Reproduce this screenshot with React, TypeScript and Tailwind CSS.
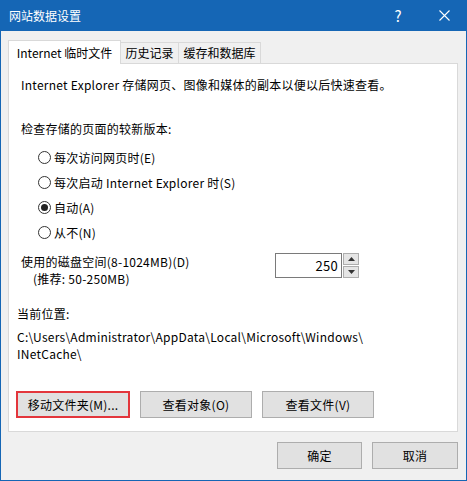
import React, { useState } from "react";

const font = { fontFamily: '"Noto Sans CJK SC", "Noto Sans", sans-serif' };

function Radio({ label, checked, onClick }: { label: string; checked: boolean; onClick: () => void }) {
  return (
    <div className="h-[25px] flex items-center pl-[22px] cursor-default" onClick={onClick}>
      <span className="w-[13px] h-[13px] rounded-full border border-[#333] bg-white flex items-center justify-center">
        {checked && <span className="w-[7px] h-[7px] rounded-full bg-[#222]" />}
      </span>
      <span className="ml-[3px]">{label}</span>
    </div>
  );
}

export default function App() {
  const [mode, setMode] = useState(2);
  const [size, setSize] = useState(250);
  const options = ["每次访问网页时(E)", "每次启动 Internet Explorer 时(S)", "自动(A)", "从不(N)"];

  return (
    <div
      className="w-[467px] h-[481px] bg-[#f0f0f0] border-x border-b border-[#1566b5] flex flex-col text-[12px] leading-[16px] text-black"
      style={font}
    >
      {/* title bar */}
      <div className="h-[31px] bg-[#1566b5] flex items-center text-white shrink-0 -mx-px">
        <span className="pl-[9px] flex-1">网站数据设置</span>
        <span className="w-[46px] text-center text-[15px]">?</span>
        <span className="w-[46px] h-full flex items-center justify-center">
          <svg width="11" height="11" viewBox="0 0 11 11" stroke="white" strokeWidth="1.1">
            <path d="M0.5 0.5 L10.5 10.5 M10.5 0.5 L0.5 10.5" />
          </svg>
        </span>
      </div>

      <div className="pl-[7px] pr-[8px] pt-[9px] flex flex-col tracking-[0.25px]">
        {/* tabs */}
        <div className="flex items-end h-[23px] tracking-normal">
          <div className="w-[113px] h-[24px] -mb-px z-10 bg-white border border-b-0 border-[#d9d9d9] flex items-center justify-center">
            Internet 临时文件
          </div>
          <div className="w-[58px] h-[21px] border border-l-0 border-b-0 border-[#d9d9d9] flex items-center justify-center">历史记录</div>
          <div className="w-[82px] h-[21px] border border-l-0 border-b-0 border-[#d9d9d9] flex items-center justify-center">缓存和数据库</div>
        </div>

        {/* panel */}
        <div className="bg-white border border-[#d9d9d9] h-[369px] flex flex-col px-[7px] pt-[13px]">
          <div className="pl-[5px]">Internet Explorer 存储网页、图像和媒体的副本以便以后快速查看。</div>
          <div className="pl-[5px] mt-[28px]">检查存储的页面的较新版本:</div>
          <div className="mt-[8px] flex flex-col">
            {options.map((o, i) => (
              <Radio key={o} label={o} checked={mode === i} onClick={() => setMode(i)} />
            ))}
          </div>

          <div className="mt-[8px] flex">
            <div className="pl-[5px] w-[259px] leading-[17px]">
              <div>使用的磁盘空间(8-1024MB)(D)</div>
              <div className="pl-[12px]">(推荐: 50-250MB)</div>
            </div>
            <div className="flex h-[25px]">
              <div className="w-[67px] border border-[#7a7a7a] flex items-center justify-end pr-[3px] text-[13px]">
                {size}
              </div>
              <div className="w-[16px] flex flex-col ml-[1px]">
                <button
                  className="h-[12px] bg-[#e5e5e5] border border-[#adadad] flex items-center justify-center"
                  onClick={() => setSize(Math.min(1024, size + 1))}
                >
                  <svg width="7" height="4" viewBox="0 0 7 4"><path d="M0 4 L3.5 0 L7 4 Z" fill="#333" /></svg>
                </button>
                <button
                  className="h-[12px] mt-[1px] bg-[#e5e5e5] border border-[#adadad] flex items-center justify-center"
                  onClick={() => setSize(Math.max(8, size - 1))}
                >
                  <svg width="7" height="4" viewBox="0 0 7 4"><path d="M0 0 L3.5 4 L7 0 Z" fill="#333" /></svg>
                </button>
              </div>
            </div>
          </div>

          <div className="pl-[1px] mt-[19px]">当前位置:</div>
          <div className="pl-[1px] mt-[6px] leading-[17px]">
            <div>C:\Users\Administrator\AppData\Local\Microsoft\Windows\</div>
            <div>INetCache\</div>
          </div>

          <div className="mt-[29px] flex gap-[10px]">
            <button className="w-[114px] h-[27px] bg-[#e1e1e1] border-2 border-[#e3363c]">移动文件夹(M)...</button>
            <button className="w-[112px] h-[27px] bg-[#e1e1e1] border border-[#adadad]">查看对象(O)</button>
            <button className="w-[112px] h-[27px] bg-[#e1e1e1] border border-[#adadad]">查看文件(V)</button>
          </div>
        </div>

        {/* dialog buttons */}
        <div className="mt-[10px] flex justify-end gap-[10px]">
          <button className="w-[85px] h-[27px] bg-[#e1e1e1] border border-[#adadad]">确定</button>
          <button className="w-[86px] h-[27px] bg-[#e1e1e1] border border-[#adadad]">取消</button>
        </div>
      </div>
    </div>
  );
}
